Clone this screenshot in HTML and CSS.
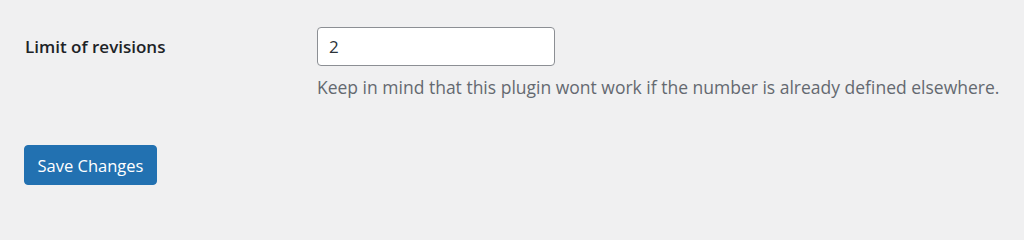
FILE: index.html
```html
<!DOCTYPE html>
<html lang="en">
<head>
<meta charset="utf-8">
<title>Settings</title>
<link rel="stylesheet" href="styles.css">
</head>
<body>
<form class="settings">
  <div class="row">
    <label class="label" for="limit">Limit of revisions</label>
    <div class="field">
      <input id="limit" class="text-input" type="text" value="2">
      <p class="desc">Keep in mind that this plugin wont work if the number is already defined elsewhere.</p>
    </div>
  </div>
  <div class="actions">
    <button type="button" class="button-primary">Save Changes</button>
  </div>
</form>
</body>
</html>
```
FILE: styles.css
```css
html, body {
  margin: 0;
  background: #f0f0f1;
}
body {
  font-family: "Open Sans", "Noto Sans", sans-serif;
  color: #1d2327;
}
.settings {
  padding: 27px 24px 0 24px;
}
.row {
  display: grid;
  grid-template-columns: 293px 1fr;
}
.label {
  font-weight: 600;
  font-size: 17px;
  line-height: 39px;
  padding-left: 1px;
  color: #1d2327;
}
.field {
  display: flex;
  flex-direction: column;
  align-items: flex-start;
}
.text-input {
  box-sizing: border-box;
  width: 238px;
  height: 39px;
  border: 1px solid #8c8f94;
  border-radius: 4px;
  background: #fff;
  padding: 0 11px;
  font-family: inherit;
  font-size: 17px;
  color: #2c3338;
  outline: none;
}
.desc {
  margin: 9px 0 0 0;
  font-size: 17.5px;
  line-height: 24px;
  color: #646970;
}
.actions {
  padding-top: 46px;
}
.button-primary {
  box-sizing: border-box;
  width: 133px;
  height: 40px;
  border: 1px solid #2271b1;
  border-radius: 4px;
  background: #2271b1;
  color: #fff;
  font-family: inherit;
  font-size: 16.5px;
  padding: 0;
}
```
